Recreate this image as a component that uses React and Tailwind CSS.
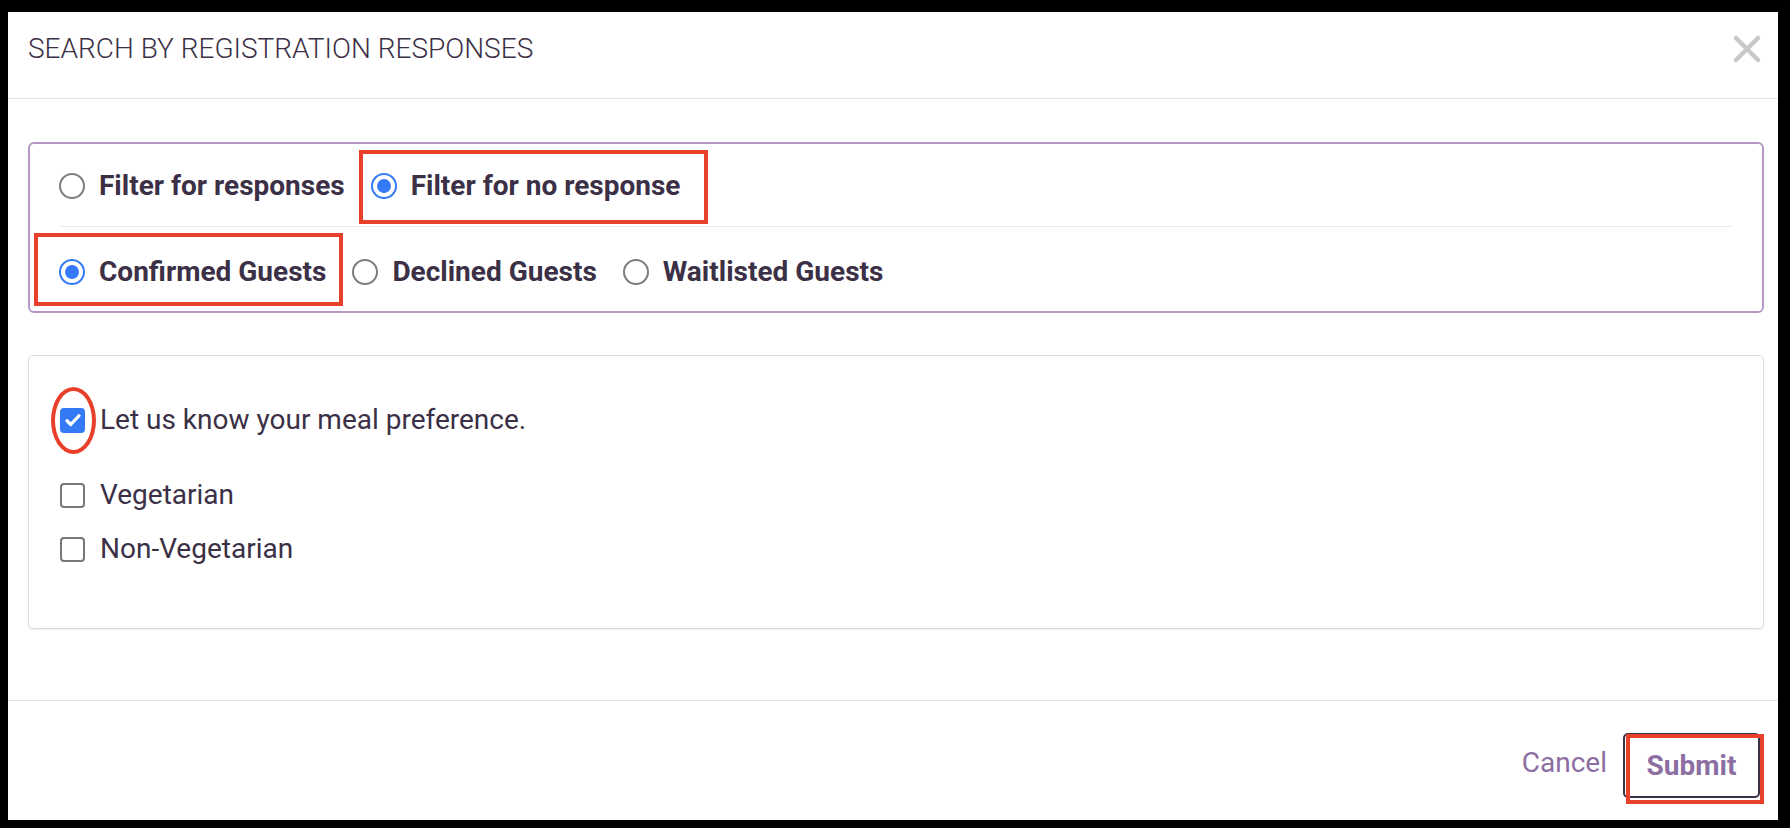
import React from "react";

const ink = "text-[#3b3046]";

// radio circle, drawn by hand so size and colours can follow the picture
const Radio = ({ checked }) =>
  checked ? (
    <span className="w-[26px] h-[26px] rounded-full border-[2.5px] border-[#3479f6] flex items-center justify-center shrink-0 bg-white">
      <span className="w-[14px] h-[14px] rounded-full bg-[#3479f6]" />
    </span>
  ) : (
    <span className="w-[26px] h-[26px] rounded-full border-2 border-[#7d7d7d] shrink-0 bg-white" />
  );

const Check = ({ checked }) =>
  checked ? (
    <span className="w-[25px] h-[25px] rounded-[4px] bg-[#3479f6] flex items-center justify-center shrink-0">
      <svg width="20" height="20" viewBox="0 0 16 16" fill="none">
        <path d="M3.2 8.6l3 3L12.8 4.6" stroke="white" strokeWidth="2.6" strokeLinecap="round" strokeLinejoin="round" />
      </svg>
    </span>
  ) : (
    <span className="w-[25px] h-[25px] rounded-[4px] border-2 border-[#777777] bg-white shrink-0" />
  );

const Option = ({ checked, label, children }) => (
  <div className="relative flex items-center h-[32px] gap-[14px]">
    <Radio checked={checked} />
    <span className={`text-[28px] font-bold leading-none ${ink}`}>{label}</span>
    {children}
  </div>
);

const Mark = ({ className }) => (
  <span className={`absolute border-4 border-[#e8402b] pointer-events-none ${className}`} />
);

export default function App() {
  return (
    <div className="w-[1790px] h-[828px] bg-black pt-[12px] pl-[8px] pr-[12px] pb-[8px]" style={{ fontFamily: "Roboto, 'Liberation Sans', sans-serif" }}>
      <div className="h-full bg-white flex flex-col">
        {/* header */}
        <div className="h-[87px] shrink-0 flex items-center justify-between pl-[20px] pr-[17px] pb-[13px] border-b border-[#e4e4e4]">
          <h1 className={`text-[28px] font-light uppercase ${ink}`}>Search by registration responses</h1>
          <svg width="28" height="28" viewBox="0 0 28 28">
            <path d="M3 3L25 25M25 3L3 25" stroke="#c8c8c8" strokeWidth="4.5" strokeLinecap="round" />
          </svg>
        </div>

        {/* body */}
        <div className="h-[601px] shrink-0 pt-[43px] pl-[20px] pr-[14px]">
          <div className="h-[171px] border-2 border-[#b597c8] rounded-[6px] flex flex-col">
            <div className="h-[82px] pt-[2px] pl-[29px] flex items-center gap-[26px]">
              <Option label="Filter for responses" />
              <Option checked label="Filter for no response">
                <Mark className="left-[-12px] right-[-28px] top-[-20px] bottom-[-22px]" />
              </Option>
            </div>
            <div className="h-px mx-[29px] bg-[#ececec]" />
            <div className="flex-1 pt-[6px] pl-[29px] flex items-center gap-[26px]">
              <Option checked label="Confirmed Guests">
                <Mark className="left-[-25px] right-[-17px] top-[-23px] bottom-[-18px]" />
              </Option>
              <Option label="Declined Guests" />
              <Option label="Waitlisted Guests" />
            </div>
          </div>

          <div className="mt-[42px] h-[274px] border border-[#dcdcdc] rounded-[5px] shadow-[0_1px_2px_rgba(0,0,0,0.08)] pt-[50px] pl-[31px] flex flex-col">
            <div className="flex items-center h-[28px] gap-[15px]">
              <span className="relative">
                <Check checked />
                <span className="absolute left-[-9px] top-[-21px] w-[45px] h-[67px] rounded-[50%] border-4 border-[#e8402b]" />
              </span>
              <span className={`text-[28px] leading-none ${ink}`}>Let us know your meal preference.</span>
            </div>
            <div className="flex items-center h-[28px] gap-[15px] mt-[47px]">
              <Check />
              <span className={`text-[28px] leading-none ${ink}`}>Vegetarian</span>
            </div>
            <div className="flex items-center h-[28px] gap-[15px] mt-[26px]">
              <Check />
              <span className={`text-[28px] leading-none ${ink}`}>Non-Vegetarian</span>
            </div>
          </div>
        </div>

        {/* footer */}
        <div className="flex-1 border-t border-[#e4e4e4] flex items-start justify-end pt-[32px] pr-[18px] gap-[16px]">
          <span className="text-[28px] text-[#8c6ea2] mt-[16px] leading-none">Cancel</span>
          <button className="relative w-[137px] h-[65px] rounded-[5px] border-2 border-[#3b3046] bg-white text-[28px] font-bold text-[#8c6ea2]">
            Submit
            <span className="absolute left-[1px] right-[-6px] top-[-1px] bottom-[-8px] border-4 border-[#e8402b]" />
          </button>
        </div>
      </div>
    </div>
  );
}
